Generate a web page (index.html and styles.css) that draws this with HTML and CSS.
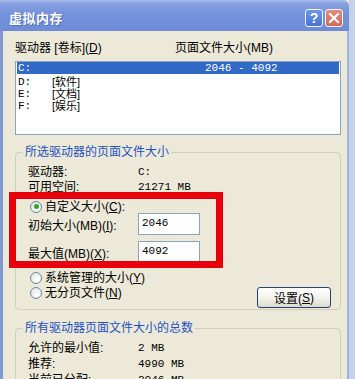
FILE: index.html
```html
<!DOCTYPE html>
<html>
<head>
<meta charset="utf-8">
<link rel="stylesheet" href="styles.css">
</head>
<body>
<div class="window">
  <div class="titlebar">
    <span class="title">虚拟内存</span>
    <div class="tbtns">
      <span class="tbtn help">?</span>
      <span class="tbtn close"><svg width="12" height="12" viewBox="0 0 12 12"><path d="M2 2 L10 10 M10 2 L2 10" stroke="#fff" stroke-width="2.2" stroke-linecap="square"/></svg></span>
    </div>
  </div>
  <div class="content">
    <div class="hdr"><span class="hc1">驱动器 [卷标](<u>D</u>)</span><span class="hc2">页面文件大小(MB)</span></div>
    <div class="listbox">
      <div class="row sel"><span class="lc1"><span class="drv m">C:</span></span><span class="m">2046 - 4092</span></div>
      <div class="row first"><span class="lc1"><span class="drv m">D:</span>[软件]</span></div>
      <div class="row"><span class="lc1"><span class="drv m">E:</span>[文档]</span></div>
      <div class="row"><span class="lc1"><span class="drv m">F:</span>[娱乐]</span></div>
    </div>
    <fieldset class="group g1">
      <legend>所选驱动器的页面文件大小</legend>
      <div class="kv"><span class="k">驱动器:</span><span class="m v">C:</span></div>
      <div class="kv"><span class="k">可用空间:</span><span class="m v">21271 MB</span></div>
      <div class="radio r1"><span class="rb checked"></span>自定义大小(<u>C</u>):</div>
      <div class="inrow"><span class="k">初始大小(MB)(<u>I</u>):</span><span class="field m">2046</span></div>
      <div class="inrow second"><span class="k">最大值(MB)(<u>X</u>):</span><span class="field m">4092</span></div>
      <div class="radio r2"><span class="rb"></span>系统管理的大小(<u>Y</u>)</div>
      <div class="lastrow">
        <div class="radio"><span class="rb"></span>无分页文件(<u>N</u>)</div>
        <span class="btn">设置(<u>S</u>)</span>
      </div>
    </fieldset>
    <fieldset class="group g2">
      <legend>所有驱动器页面文件大小的总数</legend>
      <div class="kv2"><span class="k">允许的最小值:</span><span class="m v">2 MB</span></div>
      <div class="kv2"><span class="k">推荐:</span><span class="m v">4990 MB</span></div>
      <div class="kv2"><span class="k">当前已分配:</span><span class="m v">2046 MB</span></div>
    </fieldset>
  </div>
  <div class="highlight"></div>
</div>
</body>
</html>
```
FILE: styles.css
```css
* { box-sizing: border-box; }
html, body { margin: 0; padding: 0; }
body {
  background: #c6d2ea;
  width: 355px;
  height: 379px;
  overflow: hidden;
  font-family: "Liberation Sans", "Noto Sans CJK SC", sans-serif;
  font-size: 12px;
  color: #000;
}
u { text-decoration: underline; text-underline-offset: 1px; }
.m { font-family: "Liberation Mono", "Noto Sans CJK SC", monospace; font-size: 11px; }

.window {
  position: relative;
  width: 349px;
  height: 379px;
  display: flex;
  flex-direction: column;
  background: #ece9d8;
  overflow: hidden;
}
.titlebar {
  height: 31px;
  flex: none;
  display: flex;
  align-items: center;
  justify-content: space-between;
  padding: 4px 6px 0 9px;
  background: linear-gradient(#a7bbea 0, #86a0e0 12%, #7492da 45%, #6e8cd6 100%);
  border-top-right-radius: 6px;
}
.title {
  color: #fff;
  font-weight: bold;
  font-size: 13px;
  letter-spacing: 0.5px;
  text-shadow: 1px 1px 0 #5470b8;
}
.tbtns { display: flex; gap: 2px; }
.tbtn {
  width: 18px;
  height: 18px;
  border: 1px solid #f2f4fb;
  border-radius: 3px;
  display: flex;
  align-items: center;
  justify-content: center;
  color: #fff;
  font-family: "Liberation Sans", sans-serif;
  font-weight: bold;
  font-size: 14px;
}
.help { background: linear-gradient(#6e95e6, #4a74d6); }
.close { background: linear-gradient(#e48c7c, #d06a58); }

.content {
  flex: 1;
  border-left: 3px solid #8199d2;
  border-right: 2px solid #a1b2da;
  padding: 10px 0 0 12px;
}
.hdr { display: flex; height: 14px; line-height: 14px; }
.hc1 { width: 160px; }
.listbox {
  margin-top: 6px;
  width: 326px;
  height: 74px;
  border: 1px solid #8aa3c0;
  background: #fff;
  padding: 0 1px;
}
.row { display: flex; height: 12px; line-height: 12px; padding-left: 1px; font-size: 11px; }
.row.first { margin-top: 2px; }
.row.sel { background: #3169c6; color: #fff; }
.lc1 { width: 187px; display: flex; }
.drv { width: 34px; }

.group {
  margin: 10px 0 0 0;
  width: 326px;
  min-width: 0;
  border: 1px solid #d0cfbf;
  border-radius: 4px;
  padding: 6px 9px 1px 12px;
}
.group legend {
  padding: 0 2px;
  margin-left: -5px;
  color: #1f50c2;
  line-height: 14px;
  height: 14px;
}
.g2 { margin-top: 11px; padding-top: 5px; height: 80px; }

.kv { display: flex; height: 15px; line-height: 15px; }
.kv2 { display: flex; height: 16px; line-height: 16px; }
.k { width: 110px; flex: none; }

.radio { display: flex; align-items: center; height: 14px; line-height: 14px; }
.r1 { margin-top: 5px; height: 13px; }
.r2 { margin-top: 8px; }
.rb {
  width: 12px;
  height: 12px;
  margin: 0 3px 0 2px;
  border-radius: 50%;
  border: 1px solid #6d85ad;
  background: radial-gradient(circle at 65% 65%, #fff 0, #f4f4f0 40%, #dcdcd4 100%);
  position: relative;
  flex: none;
}
.rb.checked::after {
  content: "";
  position: absolute;
  left: 2.5px;
  top: 2.5px;
  width: 5px;
  height: 5px;
  border-radius: 50%;
  background: #2fa52f;
}
.inrow { display: flex; align-items: center; height: 22px; }
.inrow.second { margin-top: 6px; }
.field {
  width: 62px;
  height: 22px;
  border: 1px solid #8aa3c0;
  background: #fff;
  padding: 3px 0 0 3px;
  line-height: 13px;
}
.lastrow {
  display: flex;
  justify-content: space-between;
  align-items: flex-start;
  margin-top: 1px;
}
.btn {
  margin-top: 1px;
  width: 74px;
  height: 21px;
  border: 1px solid #27426f;
  border-radius: 3px;
  background: linear-gradient(#ffffff 0, #f4f3ee 50%, #dcd9cc 100%);
  display: flex;
  align-items: center;
  justify-content: center;
  font-size: 12px;
}

.highlight {
  position: absolute;
  left: 9px;
  top: 192px;
  width: 214px;
  height: 76px;
  border: 7px solid #e8000c;
}
```
